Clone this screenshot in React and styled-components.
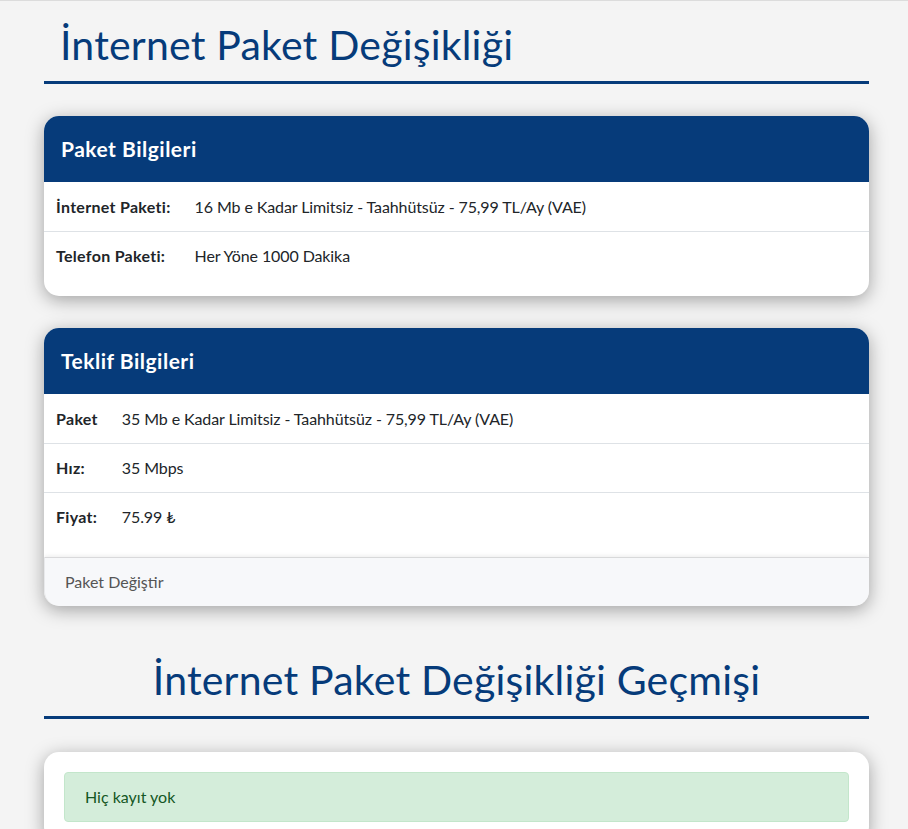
import React from 'react';
import styled, { createGlobalStyle } from 'styled-components';

const navy = '#063b7a';

const GlobalStyle = createGlobalStyle`
    html, body {
        margin: 0;
        padding: 0;
        background: #f4f4f4;
    }
    body {
        font-family: "Segoe UI", Lato, "Open Sans", sans-serif;
        font-size: 16px;
        line-height: 1.5;
        color: #212529;
        border-top: 1px solid #dcdcdc;
    }
`;

const Page = styled.div`
    padding: 0 39px 40px 44px;
`;

const Title = styled.h1`
    margin: ${p => p.$center ? '30px 0 0' : '0'};
    padding: 20px 16px 12px;
    font-size: 41px;
    font-weight: 400;
    line-height: 48px;
    letter-spacing: 0.2px;
    color: ${navy};
    border-bottom: 3px solid ${navy};
    text-align: ${p => p.$center ? 'center' : 'left'};
`;

const Card = styled.section`
    margin-top: ${p => p.$flush ? '33px' : '32px'};
    background: #fff;
    border-radius: 15px;
    overflow: hidden;
    box-shadow: 0 4px 18px rgba(0, 0, 0, 0.34);
`;

const CardHeader = styled.header`
    background: ${navy};
    color: #fff;
    padding: 21px 17px;
    font-size: 21px;
    font-weight: 700;
    line-height: 24px;
    letter-spacing: 0.5px;
`;

const InfoTable = styled.table`
    width: 100%;
    border-collapse: collapse;
    margin-bottom: 16px;
`;

const Row = styled.tr`
    &:first-child > * {
        border-top-color: transparent;
    }
`;

const Label = styled.th`
    width: 1%;
    white-space: nowrap;
    text-align: left;
    font-weight: 700;
    letter-spacing: 0.3px;
    padding: 12px;
    border-top: 1px solid #dee2e6;
`;

const Value = styled.td`
    padding: 12px;
    border-top: 1px solid #dee2e6;
    letter-spacing: -0.1px;
`;

const CardFooter = styled.footer`
    padding: 12px 20px;
    background: #f7f8fa;
    color: #555;
    border-top: 1px solid rgba(0, 0, 0, 0.12);
    border-left: 1px solid rgba(0, 0, 0, 0.06);
    box-shadow: 0 -1px 4px rgba(0, 0, 0, 0.08);
    border-radius: 0 0 15px 15px;
`;

const CardBody = styled.div`
    padding: 20px;
`;

const Alert = styled.div`
    padding: 12px 20px;
    background: #d4edda;
    border: 1px solid #c3e6cb;
    border-radius: 4px;
    color: #155724;
`;

function InfoCard({ title, rows, footer }) {
    return (
        <Card>
            <CardHeader>{title}</CardHeader>
            <InfoTable>
                <tbody>
                    {rows.map(([k, v]) => (
                        <Row key={k}>
                            <Label>{k}</Label>
                            <Value>{v}</Value>
                        </Row>
                    ))}
                </tbody>
            </InfoTable>
            {footer && <CardFooter>{footer}</CardFooter>}
        </Card>
    );
}

export default function App() {
    return (
        <Page>
            <GlobalStyle />
            <Title>İnternet Paket Değişikliği</Title>
            <InfoCard
                title="Paket Bilgileri"
                rows={[
                    ['İnternet Paketi:', '16 Mb e Kadar Limitsiz - Taahhütsüz - 75,99 TL/Ay (VAE)'],
                    ['Telefon Paketi:', 'Her Yöne 1000 Dakika'],
                ]}
            />
            <InfoCard
                title="Teklif Bilgileri"
                rows={[
                    ['Paket', '35 Mb e Kadar Limitsiz - Taahhütsüz - 75,99 TL/Ay (VAE)'],
                    ['Hız:', '35 Mbps'],
                    ['Fiyat:', '75.99 ₺'],
                ]}
                footer="Paket Değiştir"
            />
            <Title $center>İnternet Paket Değişikliği Geçmişi</Title>
            <Card $flush>
                <CardBody>
                    <Alert>Hiç kayıt yok</Alert>
                </CardBody>
            </Card>
        </Page>
    );
}
